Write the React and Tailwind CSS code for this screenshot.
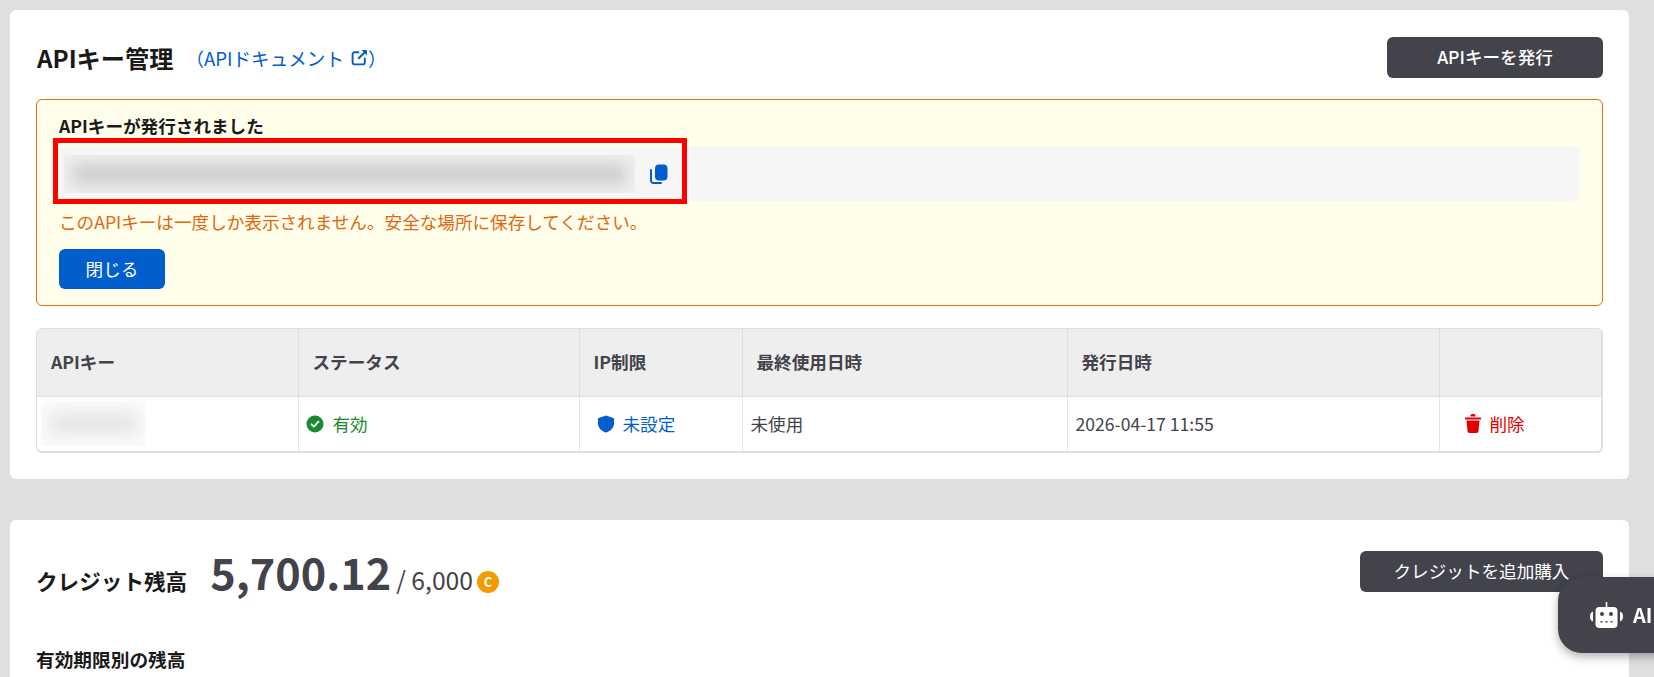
import React from 'react';

const FONT = 'font-["Noto_Sans_CJK_JP","Noto_Sans",sans-serif]';

const CopyIcon = () => (
  <svg width="18" height="20" viewBox="0 0 18 20" className="shrink-0">
    <path d="M1 6v10.5A2.5 2.5 0 0 0 3.500 19H11" fill="none" stroke="#005fcc" strokeWidth="2" strokeLinecap="round" />
    <rect x="5" y="0.500" width="12.500" height="16" rx="4" fill="#005fcc" />
  </svg>
);

const ExternalIcon = () => (
  <svg width="17" height="17" viewBox="0 0 16 16" className="ml-[7px] shrink-0">
    <path d="M7 3H3.500A2 2 0 0 0 1.500 5v7.500a2 2 0 0 0 2 2H11a2 2 0 0 0 2-2V9" fill="none" stroke="#005fcc" strokeWidth="1.800" strokeLinecap="round" />
    <path d="M10 1h5v5l-1.800-1.800-5.700 5.700-1.400-1.400 5.700-5.700z" fill="#005fcc" />
  </svg>
);

const CheckIcon = () => (
  <svg width="18" height="18" viewBox="0 0 18 18" className="shrink-0">
    <circle cx="9" cy="9" r="8.500" fill="#1a8a2e" />
    <path d="M5.500 9.300l2.400 2.400 4.600-5" fill="none" stroke="#fff" strokeWidth="1.800" strokeLinecap="round" strokeLinejoin="round" />
  </svg>
);

const ShieldIcon = () => (
  <svg width="18" height="18" viewBox="0 0 18 18" className="shrink-0">
    <path d="M9 .5l8 2.800v5.200c0 4.300-3.300 7.600-8 9-4.700-1.400-8-4.700-8-9V3.300z" fill="#005fcc" />
  </svg>
);

const TrashIcon = () => (
  <svg width="16" height="19" viewBox="0 0 16 19" className="shrink-0">
    <path d="M0 3.500h16v2H0zM5.500 1.500A1.500 1.500 0 0 1 7 0h2a1.500 1.500 0 0 1 1.500 1.500v1h-5zM1.500 6.500h13l-1 10.500a2 2 0 0 1-2 2h-7a2 2 0 0 1-2-2z" fill="#e00000" />
  </svg>
);

const RobotIcon = () => (
  <svg width="33" height="26" viewBox="0 0 33 26" className="shrink-0">
    <rect x="15.700" y="0" width="1.600" height="6" fill="#fff" />
    <rect x="5.500" y="5" width="22" height="21" rx="4" fill="#fff" />
    <path d="M3 9.500v10C1 19 0 17 0 14.500s1-4.500 3-5zM30 9.500v10c2-.5 3-2.500 3-5s-1-4.500-3-5z" fill="#fff" />
    <circle cx="12" cy="12" r="2" fill="#42434b" />
    <circle cx="21" cy="12" r="2" fill="#42434b" />
    <path d="M10.500 19h2v1.500h-2zM15.500 19h2v1.500h-2zM20.500 19h2v1.500h-2z" fill="#42434b" />
  </svg>
);

const headers = [
  { label: 'APIキー', width: 'w-[261px]' },
  { label: 'ステータス', width: 'w-[281px]' },
  { label: 'IP制限', width: 'w-[163px]' },
  { label: '最終使用日時', width: 'w-[325px]' },
  { label: '発行日時', width: 'w-[372px]' },
  { label: '', width: '' },
];

export default function App() {
  return (
    <div className={`h-[677px] overflow-hidden bg-[#dfdfdf] pl-[10px] pr-[25px] pt-[10px] text-[17.600px] text-[#42434b] ${FONT}`}>
      <div className="flex flex-col gap-[41px]">
        <section className="rounded-md bg-white px-[26px] pb-[26px] pt-[27px]">
          <div className="flex items-center justify-between">
            <div className="flex items-center">
              <h1 className="ml-[1px] text-[24.200px] font-bold leading-[36px] text-[#1a1a1a]">APIキー管理</h1>
              <a className="ml-[12px] flex items-center text-[18.600px] text-[#005fcc]">
                （APIドキュメント
                <ExternalIcon />
                ）
              </a>
            </div>
            <button className="h-[41px] w-[216px] rounded-md bg-[#42434b] font-medium text-white">APIキーを発行</button>
          </div>

          <div className="relative mt-[21px] rounded-md border border-[#e8700f] bg-[#fffeeb] px-[22px] pb-[16px] pt-[14px]">
            <div className="font-bold leading-[24px] text-[#1a1a1a]">APIキーが発行されました</div>
            <div className="mt-[9px] flex h-[54px] items-center rounded-md bg-[#f6f6f6] pl-[5px]">
              <div className="h-[38px] w-[571px] overflow-hidden bg-[#f1f1f1] px-[8px] py-[8px]">
                <div className="h-full w-full bg-[#cdcdcd] blur-[8px]" />
              </div>
              <div className="ml-[15px]">
                <CopyIcon />
              </div>
            </div>
            <div className="mt-[9px] leading-[24px] text-[#e0670f]">このAPIキーは一度しか表示されません。安全な場所に保存してください。</div>
            <button className="mt-[15px] block h-[40px] w-[106px] rounded-md bg-[#005fcc] text-white">閉じる</button>
            {/* annotation drawn over the key row */}
            <div className="absolute left-[16px] top-[38px] h-[66px] w-[634px] border-[5px] border-[#ff0000]" />
          </div>

          <div className="mt-[22px] overflow-hidden rounded-md border border-b-2 border-r-2 border-[#dedede]">
            <table className="w-full table-fixed border-collapse">
              <thead>
                <tr className="h-[67px] border-b border-[#dedede] bg-[#eeeeee]">
                  {headers.map((h, i) => (
                    <th key={i} className={`border-r border-[#dedede] pl-[14px] text-left font-bold last:border-r-0 ${h.width}`}>{h.label}</th>
                  ))}
                </tr>
              </thead>
              <tbody>
                <tr className="h-[55px]">
                  <td className="border-r border-[#e4e4e4] pl-[4px]">
                    <div className="h-[45px] w-[105px] overflow-hidden bg-[#fbfbfb] px-[8px] py-[11px]">
                      <div className="h-full w-full bg-[#e6e6e6] blur-[8px]" />
                    </div>
                  </td>
                  <td className="border-r border-[#e4e4e4] pl-[7px]">
                    <span className="flex items-center gap-[9px] text-[#1a8a2e]"><CheckIcon />有効</span>
                  </td>
                  <td className="border-r border-[#e4e4e4] pl-[17px]">
                    <span className="flex items-center gap-[8px] text-[#005fcc]"><ShieldIcon />未設定</span>
                  </td>
                  <td className="border-r border-[#e4e4e4] pl-[8px]">未使用</td>
                  <td className="border-r border-[#e4e4e4] pl-[8px]">2026-04-17 11:55</td>
                  <td className="pl-[25px]">
                    <span className="flex items-center gap-[9px] text-[#e00000]"><TrashIcon />削除</span>
                  </td>
                </tr>
              </tbody>
            </table>
          </div>
        </section>

        <section className="rounded-md bg-white px-[26px] pb-[40px] pt-[31px]">
          <div className="flex items-start justify-between">
            <div className="flex items-baseline">
              <span className="text-[21.600px] font-bold text-[#1a1a1a]">クレジット残高</span>
              <span className="ml-[23px] text-[43.200px] font-bold leading-[41px]">5,700.12</span>
              <span className="ml-[5px] text-[24.700px]">/ 6,000</span>
              <span className="ml-[4px] mt-[20px] flex h-[22px] w-[22px] items-center justify-center self-start rounded-full bg-[#f09c00] text-[13px] font-bold text-white">C</span>
            </div>
            <button className="h-[41px] w-[243px] rounded-md bg-[#42434b] text-white">クレジットを追加購入</button>
          </div>
          <h2 className="mt-[47px] text-[18.700px] font-bold leading-[28px] text-[#1a1a1a]">有効期限別の残高</h2>
        </section>
      </div>

      <button className="fixed left-[1558px] top-[577px] flex h-[76px] w-[140px] items-center gap-[10px] rounded-[24px] bg-[#42434b] pl-[32px] text-[20px] font-bold text-white shadow-[0_4px_10px_rgba(0,0,0,0.3)]">
        <RobotIcon />
        AI
      </button>
    </div>
  );
}
